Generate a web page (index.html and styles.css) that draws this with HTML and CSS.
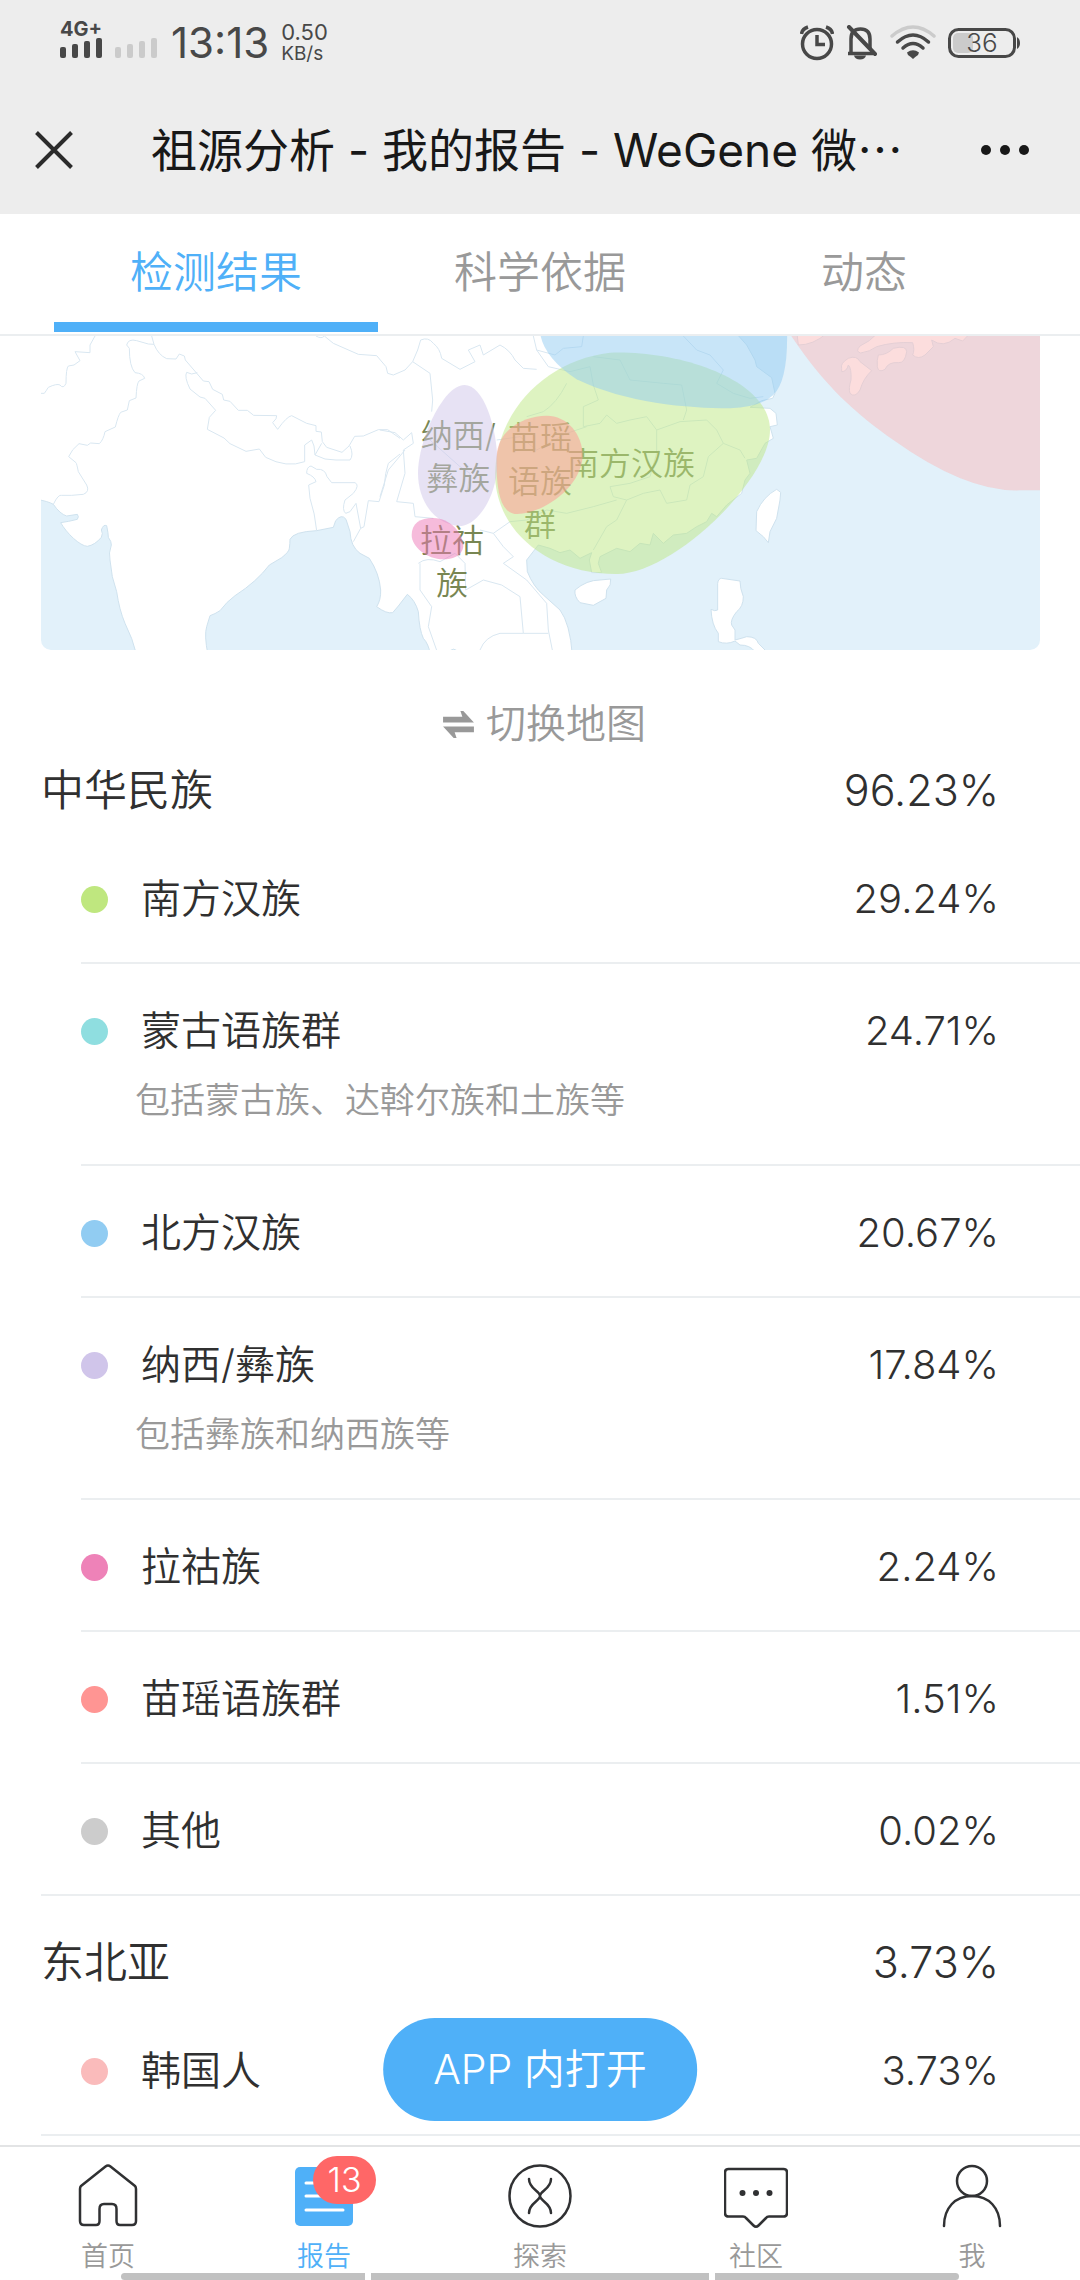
FILE: index.html
```html
<!DOCTYPE html>
<html lang="zh-CN">
<head>
<meta charset="utf-8">
<meta name="viewport" content="width=device-width, initial-scale=1">
<title>祖源分析 - 我的报告 - WeGene</title>
<link rel="stylesheet" href="styles.css">
</head>
<body>
<div class="status">
  <div class="signals">
    <span class="network">4G+</span>
    <svg width="98" height="20" viewBox="0 0 98 20" aria-hidden="true">
      <g fill="#484848"><rect x="0" y="9" width="6" height="11" rx="2"/><rect x="12" y="6" width="6" height="14" rx="2"/><rect x="24" y="3" width="6" height="17" rx="2"/><rect x="36" y="0" width="6" height="20" rx="2"/></g>
      <g fill="#cbcbcb"><rect x="55" y="9" width="6" height="11" rx="2"/><rect x="67" y="6" width="6" height="14" rx="2"/><rect x="79" y="3" width="6" height="17" rx="2"/><rect x="91" y="0" width="6" height="20" rx="2"/></g>
    </svg>
  </div>
  <span class="clock">13:13</span>
  <div class="speed"><span class="rate">0.50</span><span>KB/s</span></div>
  <div class="indicators">
    <svg width="34" height="36" viewBox="0 0 34 36" fill="none" stroke="#484848" aria-hidden="true"><circle cx="17" cy="19" r="14.500" stroke-width="3.500"/><path d="M17 10v9.500h8" stroke-width="3.500"/><path d="M1.500 9Q2 4 8 2M32.500 9Q32 4 26 2" stroke-width="3.500"/></svg>
    <svg width="32" height="36" viewBox="0 0 32 36" fill="none" stroke="#484848" stroke-width="3.500" aria-hidden="true"><path d="M2 28.500h25M5 28V14Q5 4 14.500 4T24 14V24"/><path d="M8 30.500h12q-1 4-6 4t-6-4z" fill="#484848" stroke="none"/><path d="M3 2L29 29" stroke-width="4" stroke-linecap="round"/></svg>
    <svg width="46" height="36" viewBox="0 0 46 36" fill="none" stroke="#484848" stroke-width="3.500" stroke-linecap="round" aria-hidden="true"><path d="M2 11Q23-7 44 11" stroke="#cbcbcb"/><path d="M7.500 17Q23 3 38.500 17M13 23Q23 14 33 23"/><path d="M17 27.500Q23 23 29 27.500L28 30Q25 32 23 34Q21 32 18 30Z" fill="#484848" stroke="none"/></svg>
    <div class="battery"><svg width="72" height="30" viewBox="0 0 72 30" aria-hidden="true"><rect x="5" y="5" width="20" height="20" rx="5" fill="#cbcbcb"/><rect x="1.500" y="1.500" width="65" height="27" rx="9" fill="none" stroke="#484848" stroke-width="3"/><path d="M69 9q3 2 3 6t-3 6z" fill="#484848"/></svg><span>36</span></div>
  </div>
</div>
<header class="titlebar">
  <button class="icon-button" aria-label="关闭"><svg width="38" height="38" viewBox="0 0 38 38" stroke="#2b2b2b" stroke-width="4" aria-hidden="true"><path d="M1.500 1.500l35 35M36.500 1.500l-35 35"/></svg></button>
  <h1>祖源分析 - 我的报告 - WeGene 微<span class="more">…</span></h1>
  <button class="icon-button" aria-label="更多"><svg width="50" height="12" viewBox="0 0 50 12" fill="#181818" aria-hidden="true"><circle cx="6" cy="6" r="5"/><circle cx="25" cy="6" r="5"/><circle cx="44" cy="6" r="5"/></svg></button>
</header>
<nav class="tabs" aria-label="报告内容">
  <a class="tab current" href="#result">检测结果</a>
  <a class="tab" href="#science">科学依据</a>
  <a class="tab" href="#news">动态</a>
</nav>
<main id="result">
  <svg class="map" viewBox="123 18 2997 942" role="img" aria-label="祖源分布地图">
    <rect x="123" y="18" width="2997" height="942" fill="#fff"/>
    <g fill="#e2f1fa" stroke="#cfe2ee" stroke-width="3" stroke-linejoin="round">
      <path d="M110 508Q145 514 160 523Q180 552 200 558L232 553Q238 560 232 568Q205 575 182 578C200 610 240 648 262 649Q285 645 304 622Q310 610 304 600Q310 582 320 587Q325 610 325 622Q335 635 334 645Q325 670 330 690L337 740L350 785Q358 840 375 880Q398 925 410 975H110Z"/>
      <path d="M624 975Q612 915 620 890L630 857Q645 852 660 842Q680 815 705 797Q770 755 808 705L845 683Q868 665 868 655Q870 640 870 628Q880 605 950 602L1000 592L1007 572Q1025 550 1038 568L1050 605Q1052 650 1080 670L1108 685Q1138 730 1142 780Q1143 810 1130 830Q1160 852 1178 848L1195 828L1222 793Q1245 810 1255 845Q1258 900 1270 925Q1285 940 1292 975Z"/>
      <path d="M1340 975q20-35 42 0z"/>
      <path d="M2200 0L2240 45L2265 90L2270 110L2315 143L2325 190L2318 205L2285 212L2250 232L2310 235L2328 250L2332 285L2310 290L2320 325L2295 340L2270 385L2240 390L2250 430L2235 450L2225 490L2180 525L2150 560L2135 550L2120 575L2090 590L2060 610L2020 615L1990 640L1960 610L1950 645L1920 640L1890 665L1850 655L1800 680L1795 700L1805 728L1775 728L1768 690L1775 668L1740 685L1710 660L1680 668L1650 655L1615 645L1580 690L1582 725Q1600 770 1630 795L1680 840Q1710 880 1717 975H3140V0Z"/>
    </g>
    <g fill="#fff" stroke="#cfe2ee" stroke-width="3" stroke-linejoin="round">
      <path d="M2330 478L2342 487L2340 510L2330 565L2310 605L2305 638L2290 620L2268 602L2270 545Q2290 500 2330 478Z"/>
      <path d="M1725 780Q1760 750 1800 750L1832 747Q1835 765 1820 780L1818 805L1780 826L1740 818Q1722 800 1725 780Z"/>
      <path d="M2165 745L2220 753Q2220 775 2230 800Q2230 830 2210 845Q2190 870 2195 885L2205 900V930Q2225 925 2240 920Q2270 920 2275 940L2300 965H2265Q2250 945 2220 945L2205 933Q2180 945 2155 935V910Q2135 885 2133 838Q2145 845 2153 840V760Q2155 745 2165 745Z"/>
      <path d="M2390 0L2395 45Q2440 45 2480 10Z"/>
      <path d="M2632 10Q2610 35 2580 48Q2565 65 2582 69Q2610 65 2630 50Q2680 35 2738 38Q2745 60 2738 75Q2755 90 2775 75L2800 50L2795 30Q2830 55 2865 25L2888 33L2910 10Z"/>
      <path d="M2525 115Q2520 100 2545 85Q2570 75 2580 95L2615 122Q2590 145 2580 180Q2565 205 2550 190Q2545 175 2553 150Q2555 115 2545 105Q2540 125 2525 125Z"/>
      <path d="M2635 75Q2660 75 2680 55Q2720 45 2720 65Q2715 100 2695 98Q2665 95 2655 118Q2635 130 2632 110Q2630 90 2635 75Z"/>
    </g>
    <g fill="none" stroke="#d9e7f1" stroke-width="3" stroke-linejoin="round">
      <path d="M123 190H133Q140 180 145 172Q170 160 180 165Q190 178 198 160Q198 115 205 108L222 105L240 92L225 65L270 68V45L285 18M160 523Q175 492 185 496L215 496L250 493Q270 485 260 465L235 425Q230 400 228 398L206 380Q215 358 237 341L262 346L272 339L298 341Q310 330 315 305L346 291Q355 255 362 247L382 240L388 212L408 204Q410 160 417 153L434 145Q430 130 405 128Q388 110 388 55L380 45Q385 25 410 32L445 42L462 43L455 18M462 43Q475 75 500 86L528 87L538 72L553 78L556 90L610 153L627 155L638 178L667 193L671 210L690 214L715 241H742L761 256L830 257Q832 265 818 278L833 298Q860 260 875 257L920 280L948 287V304L964 306L967 335L980 352L1026 367L1047 348L1064 319L1090 318L1135 299H1163L1200 325"/>
      <path d="M592 128L575 132L560 127Q552 140 570 177L600 201L615 205L647 241L628 262L622 298L672 324L690 341L738 364L778 357L797 382Q860 415 914 395V345L935 330L942 348L945 375L965 340M945 375L975 387L1008 390L1050 390Q1062 375 1050 348M950 602Q945 550 930 505L926 465L948 455Q945 440 920 430Q920 410 933 408L950 418Q975 415 981 440L995 458H1065Q1080 465 1060 490L1035 510Q1025 540 1037 550L1050 545L1068 520L1082 595L1092 590L1105 512L1137 515L1153 465Q1155 430 1165 400L1200 372M1060 635L1082 595"/>
      <path d="M948 18Q965 28 973 18L1000 40L1075 73L1130 77L1158 110L1163 130L1180 135L1215 120L1238 95L1253 60L1262 30Q1285 20 1300 40Q1320 55 1325 85L1350 100L1380 118L1425 95L1405 60L1440 45L1450 75L1500 45Q1530 60 1545 90L1570 115L1610 118M1238 95L1290 130L1298 210L1295 245M1140 300L1185 308L1210 330L1235 308L1240 340L1210 360L1215 430L1190 515L1240 520L1245 560L1300 565M1140 500L1165 420L1215 360M1440 600L1480 610L1530 575L1580 570M1480 610L1510 650L1540 680L1510 700L1580 750L1640 820L1645 900L1660 975M1255 700Q1280 680 1320 695L1365 670L1395 700L1397 780L1450 750L1505 765L1560 800L1570 910L1500 910Q1455 920 1440 960M1260 700L1260 780L1295 830L1285 890L1315 975M1570 910L1645 910"/>
      <path d="M1600 18L1610 60L1665 75L1690 55L1745 50L1750 18M1610 60L1645 110L1710 125L1770 110L1780 165L1795 210L1750 230L1750 290L1800 280L1820 255L1850 280L1890 270L1940 260L1970 300L1970 370L1950 440L1890 460L1830 470L1840 500L1880 510L1930 490L1980 480L2000 520L2060 510L2070 465L2110 440L2125 380L2170 340L2220 360L2235 385M1970 300L2040 275L2120 270L2150 300L2170 340M2050 18L2090 60L2130 75L2170 120L2150 160L2200 190L2250 205L2290 200M1700 160Q1670 220 1630 245L1580 260M1780 80L1860 90L1890 150L1990 160L2045 165L2060 240L2050 270M1880 510L1850 570L1820 590L1780 660M1850 510L1780 530L1700 550L1640 540L1580 570M1290 330L1380 410L1410 430L1400 490M1490 330L1560 320L1610 360L1700 310L1760 290"/>
    </g>
    <g class="place">
      <text x="1375" y="350">纳西/</text><text x="1375" y="480">彝族</text>
      <text x="1620" y="358">苗瑶</text><text x="1620" y="488">语族</text><text x="1620" y="618">群</text>
      <text x="1893" y="435">南方汉族</text>
      <text x="1356" y="666">拉祜</text><text x="1356" y="796">族</text>
    </g>
    <path opacity=".5" fill="#bee784" d="M1485 430C1490 240 1640 90 1830 68C2040 60 2310 150 2310 300C2310 450 2020 732 1850 732C1640 732 1485 600 1485 430Z"/>
    <path opacity=".5" fill="#91ccf2" d="M1619 0Q1626 80 1730 148C1880 220 2060 235 2190 235Q2280 232 2320 195Q2365 150 2361 0Z"/>
    <path opacity=".5" fill="#d0c5ea" d="M1393 165C1450 165 1492 290 1492 400C1492 490 1440 580 1385 588C1310 588 1254 520 1254 430C1254 330 1330 165 1393 165Z"/>
    <path opacity=".5" fill="#ff9593" d="M1640 257C1700 257 1748 310 1748 380C1740 480 1620 552 1552 552C1500 552 1488 480 1490 380C1492 300 1570 257 1640 257Z"/>
    <path opacity=".5" fill="#ee78b8" d="M1300 564C1350 564 1390 610 1390 650C1385 680 1355 688 1330 688C1280 688 1235 650 1235 615C1235 580 1260 564 1300 564Z"/>
    <path opacity=".5" fill="#fabbbb" d="M2362 0C2470 165 2560 245 2680 330Q2900 487 3060 481H3120V0Z"/>
  </svg>
  <button class="switch"><svg width="31" height="27" viewBox="0 0 32 28" fill="#999" aria-hidden="true"><path d="M0 6h20L18 0h3l11 12H0zM32 22H12l2 6h-3L0 16h32z"/></svg>切换地图</button>
  <section class="group">
    <h2><span>中华民族</span><span>96.23%</span></h2>
    <ul>
      <li><div class="line"><i class="dot green"></i><span>南方汉族</span><span class="value">29.24%</span></div></li>
      <li><div class="line"><i class="dot teal"></i><span>蒙古语族群</span><span class="value">24.71%</span></div><p>包括蒙古族、达斡尔族和土族等</p></li>
      <li><div class="line"><i class="dot blue"></i><span>北方汉族</span><span class="value">20.67%</span></div></li>
      <li><div class="line"><i class="dot purple"></i><span>纳西/彝族</span><span class="value">17.84%</span></div><p>包括彝族和纳西族等</p></li>
      <li><div class="line"><i class="dot pink"></i><span>拉祜族</span><span class="value">2.24%</span></div></li>
      <li><div class="line"><i class="dot red"></i><span>苗瑶语族群</span><span class="value">1.51%</span></div></li>
      <li><div class="line"><i class="dot gray"></i><span>其他</span><span class="value">0.02%</span></div></li>
    </ul>
  </section>
  <section class="group">
    <h2><span>东北亚</span><span>3.73%</span></h2>
    <ul>
      <li><div class="line"><i class="dot rose"></i><span>韩国人</span><span class="value">3.73%</span></div></li>
    </ul>
  </section>
</main>
<footer class="dock">
  <button class="open-app">APP 内打开</button>
  <nav class="bottom-nav" aria-label="主导航">
    <a href="#home"><svg width="64" height="66" viewBox="0 0 64 66" aria-hidden="true"><path d="M29.500 3.500Q32 1.500 34.500 3.500L59 23Q60 24 60 26V58Q60 62 56 62H44Q40.500 62 40.500 58V46Q40.500 41 36 41H28Q23.500 41 23.500 46V58Q23.500 62 20 62H8Q4 62 4 58V26Q4 24 5 23Z"/></svg>首页</a>
    <a class="current" href="#report"><span class="badged"><svg width="64" height="66" viewBox="0 0 64 66" aria-hidden="true"><rect x="3" y="4" width="58" height="59" rx="5" fill="#4fb0f8" stroke="none"/><path d="M14 20h36M14 33h36M14 47h37" stroke="#fff" stroke-width="3"/></svg><b class="badge">13</b></span>报告</a>
    <a href="#explore"><svg width="64" height="66" viewBox="0 0 64 66" aria-hidden="true"><circle cx="32" cy="33" r="30.500"/><path d="M21 16C21 26 32 28 32 33S21 40 21 50M43 16C43 26 32 28 32 33S43 40 43 50"/></svg>探索</a>
    <a href="#community"><svg width="64" height="66" viewBox="0 0 64 66" aria-hidden="true"><path d="M4.500 6H59.500Q63 6 63 9.500V50Q63 53.500 59.500 53.500H45Q43 53.500 42 55L34.500 62.500Q32 65 29.500 62.500L22 55Q21 53.500 19 53.500H4.500Q1 53.500 1 50V9.500Q1 6 4.500 6Z"/><g fill="#303133" stroke="none"><circle cx="18.500" cy="30" r="3"/><circle cx="32" cy="30" r="3"/><circle cx="45.500" cy="30" r="3"/></g></svg>社区</a>
    <a href="#me"><svg width="64" height="66" viewBox="0 0 64 66" aria-hidden="true"><circle cx="32" cy="18" r="15"/><path d="M4 63C4 45 15 33 32 33S60 45 60 63"/></svg>我</a>
  </nav>
  <div class="gesture" aria-hidden="true"><i></i><i></i><i></i></div>
</footer>
</body>
</html>
```
FILE: styles.css
```css
* { box-sizing: border-box; }

body {
  margin: 0;
  min-height: 100vh;
  display: flex;
  flex-direction: column;
  background: #fff;
  color: #303030;
  font-family: Inter, "Noto Sans CJK SC", sans-serif;
  font-weight: 350;
}

button {
  border: 0;
  padding: 0;
  background: none;
  font: inherit;
  color: inherit;
}

a { color: inherit; text-decoration: none; }
svg { display: block; flex: none; }
ul, h1, h2, p { margin: 0; padding: 0; font-weight: inherit; }
ul { list-style: none; }

.status {
  display: flex;
  align-items: center;
  height: 86px;
  padding: 0 60px;
  background: #ededed;
  color: #484848;
}

.signals { margin-top: -8px; }
.network { display: block; font-size: 20px; line-height: 17px; font-weight: 700; }
.clock { margin-left: 13px; font-size: 42px; line-height: 50px; font-weight: 400; }
.speed { display: flex; flex-direction: column; margin-left: 12px; font-size: 19px; line-height: 22px; font-weight: 400; }
.rate { font-size: 22px; }
.indicators { display: flex; align-items: center; gap: 12px; margin-left: auto; }
.battery { position: relative; }
.battery span { position: absolute; inset: 0 4px 0 0; text-align: center; font-size: 26px; line-height: 30px; }

.titlebar {
  display: flex;
  align-items: center;
  justify-content: space-between;
  height: 128px;
  padding: 0 50px 0 35px;
  background: #ededed;
  color: #181818;
}

.titlebar h1 { flex: 1; padding: 0 0 3px 78px; font-size: 46px; line-height: 60px; font-weight: 400; white-space: nowrap; }
.more { font-family: "Noto Sans CJK SC", sans-serif; }

.tabs {
  display: grid;
  grid-template-columns: repeat(3, 1fr);
  height: 122px;
  padding: 0 5% 2px;
  border-bottom: 2px solid #ebeef0;
  color: #999;
  font-size: 43px;
}

.tab { padding-top: 8px; line-height: 100px; text-align: center; border-bottom: 10px solid transparent; }
.tabs .current { color: #4fb0f8; border-color: #4fb0f8; }

.map { width: calc(100% - 81px); margin-left: 41px; border-radius: 0 0 10px 10px; }
.place { fill: #788652; font-size: 96px; text-anchor: middle; }

.switch {
  display: flex;
  align-items: center;
  gap: 12px;
  margin: 44px auto 0;
  padding-left: 9px;
  color: #999;
  font-size: 40px;
  line-height: 60px;
}

.group { padding-bottom: 30px; }

.group h2 {
  display: flex;
  justify-content: space-between;
  padding: 3px 81px 0 41px;
  font-size: 43px;
  line-height: 66px;
}

.group ul { margin-top: 9px; }
.group li { padding: 35px 0 31px; border-bottom: 2px solid #ebeef0; margin-left: 81px; }
.group li:last-child { margin-left: 41px; padding-left: 40px; }
.line { display: flex; align-items: center; padding-right: 81px; font-size: 40px; line-height: 64px; }
.line .value { margin-left: auto; }
.group p { padding: 10px 0 6px 54px; color: #999; font-size: 35px; line-height: 54px; }
.dot { width: 27px; height: 27px; margin-right: 33px; border-radius: 50%; }
.green { background: #bfe77f; }
.teal { background: #8fdee0; }
.blue { background: #91ccf2; }
.purple { background: #d0c5ea; }
.pink { background: #ee82b8; }
.red { background: #ff9593; }
.gray { background: #ccc; }
.rose { background: #fabbbb; }

.group:last-child { padding-bottom: 0; }

.dock { position: fixed; left: 0; right: 0; bottom: 0; }

.open-app {
  position: absolute;
  left: 50%;
  bottom: calc(100% + 24px);
  transform: translateX(-50%);
  padding: 0 50px;
  border-radius: 52px;
  background: #4fb0f8;
  color: #fff;
  font-size: 41px;
  line-height: 103px;
  white-space: nowrap;
}

.bottom-nav {
  display: grid;
  grid-template-columns: repeat(5, 1fr);
  height: 135px;
  padding-top: 16px;
  border-top: 2px solid #e3e4e5;
  background: #fff;
  color: #999;
  font-size: 27px;
  line-height: 40px;
}

.bottom-nav a { display: flex; flex-direction: column; align-items: center; gap: 8px; }
.bottom-nav .current { color: #4fb0f8; }
.bottom-nav svg { fill: none; stroke: #303133; stroke-width: 2.5; stroke-linecap: round; stroke-linejoin: round; }
.badged { position: relative; }
.badge {
  position: absolute;
  left: 21px;
  top: -7px;
  width: 63px;
  border-radius: 24px;
  background: #ff6767;
  color: #fff;
  font-size: 34px;
  line-height: 48px;
  font-weight: 350;
  text-align: center;
}

.gesture { position: absolute; left: 0; right: 0; bottom: 0; display: grid; grid-template-columns: 244fr 338fr 244fr; gap: 6px; padding: 0 121px; }
.gesture i { height: 7px; background: #c1c1c1; }
.gesture i:first-child { border-radius: 4px 0 0 4px; }
.gesture i:last-child { border-radius: 0 4px 4px 0; }
```
